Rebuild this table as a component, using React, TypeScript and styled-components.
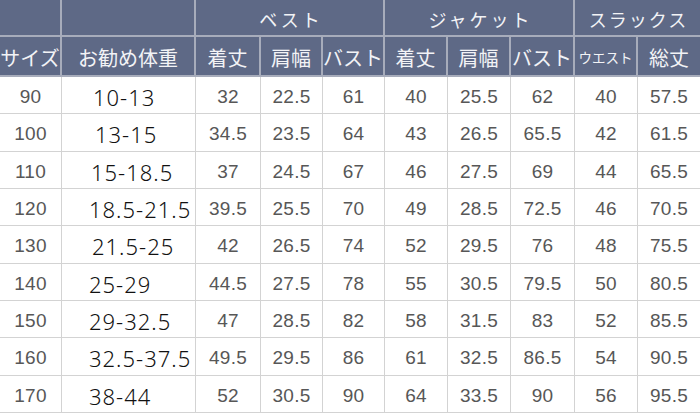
import React from "react";
import styled, { createGlobalStyle } from "styled-components";

const GlobalStyle = createGlobalStyle`
  html, body { margin: 0; padding: 0; background: #ffffff; }
  * { box-sizing: border-box; }
`;

const COLS = "62px 134px 65px 62px 62px 63px 63px 64px 63px 62px";

const Table = styled.div`
  display: grid;
  grid-template-columns: ${COLS};
  grid-template-rows: 37px 40px repeat(9, 1fr);
  width: 700px;
  height: 413px;
  overflow: hidden;
`;

const HeadCell = styled.div<{ $span?: number; $last?: boolean; $size?: number; $spacing?: number }>`
  grid-column: span ${(p) => p.$span ?? 1};
  background: #5e6986;
  color: #f2f3f6;
  font-family: "Noto Sans CJK JP", "Noto Sans", sans-serif;
  font-size: ${(p) => p.$size ?? 20}px;
  letter-spacing: ${(p) => p.$spacing ?? 0}px;
  padding-left: ${(p) => p.$spacing ?? 0}px;
  padding-top: 2px;
  display: flex;
  align-items: center;
  justify-content: center;
  white-space: nowrap;
  overflow: hidden;
  border-right: ${(p) => (p.$last ? "none" : "2px solid #a7acbb")};
  border-bottom: 2px solid #a7acbb;
`;

const Cell = styled.div<{ $last?: boolean }>`
  display: flex;
  align-items: center;
  justify-content: center;
  padding-top: 4px;
  color: #575757;
  font-family: "Liberation Sans", Arial, sans-serif;
  font-size: 19px;
  letter-spacing: 0.3px;
  white-space: nowrap;
  border-right: ${(p) => (p.$last ? "none" : "1px solid #d3d3d3")};
  border-bottom: 1px solid #d3d3d3;
`;

const WeightCell = styled(Cell)<{ $indent: number }>`
  justify-content: flex-start;
  padding-left: ${(p) => p.$indent}px;
  color: #111111;
  font-family: "Noto Sans", "Noto Sans CJK JP", sans-serif;
  font-weight: 300;
  font-size: 22px;
  letter-spacing: 1px;
`;

type Row = { size: string; weight: string; indent: number; vals: string[] };

const rows: Row[] = [
  { size: "90", weight: "10-13", indent: 31, vals: ["32", "22.5", "61", "40", "25.5", "62", "40", "57.5"] },
  { size: "100", weight: "13-15", indent: 33, vals: ["34.5", "23.5", "64", "43", "26.5", "65.5", "42", "61.5"] },
  { size: "110", weight: "15-18.5", indent: 29, vals: ["37", "24.5", "67", "46", "27.5", "69", "44", "65.5"] },
  { size: "120", weight: "18.5-21.5", indent: 27, vals: ["39.5", "25.5", "70", "49", "28.5", "72.5", "46", "70.5"] },
  { size: "130", weight: "21.5-25", indent: 30, vals: ["42", "26.5", "74", "52", "29.5", "76", "48", "75.5"] },
  { size: "140", weight: "25-29", indent: 27, vals: ["44.5", "27.5", "78", "55", "30.5", "79.5", "50", "80.5"] },
  { size: "150", weight: "29-32.5", indent: 27, vals: ["47", "28.5", "82", "58", "31.5", "83", "52", "85.5"] },
  { size: "160", weight: "32.5-37.5", indent: 27, vals: ["49.5", "29.5", "86", "61", "32.5", "86.5", "54", "90.5"] },
  { size: "170", weight: "38-44", indent: 27, vals: ["52", "30.5", "90", "64", "33.5", "90", "56", "95.5"] },
];

const subHeads: { label: string; size?: number }[] = [
  { label: "サイズ" },
  { label: "お勧め体重" },
  { label: "着丈" },
  { label: "肩幅" },
  { label: "バスト" },
  { label: "着丈" },
  { label: "肩幅" },
  { label: "バスト" },
  { label: "ウエスト", size: 13.5 },
  { label: "総丈" },
];

export default function App() {
  return (
    <>
      <GlobalStyle />
      <Table>
        <HeadCell />
        <HeadCell />
        <HeadCell $span={3} $size={18} $spacing={3}>ベスト</HeadCell>
        <HeadCell $span={3} $size={18} $spacing={3}>ジャケット</HeadCell>
        <HeadCell $span={2} $size={18} $spacing={2} $last>スラックス</HeadCell>
        {subHeads.map((h, i) => (
          <HeadCell key={i} $size={h.size} $last={i === subHeads.length - 1}>
            {h.label}
          </HeadCell>
        ))}
        {rows.map((r) => (
          <React.Fragment key={r.size}>
            <Cell>{r.size}</Cell>
            <WeightCell $indent={r.indent}>{r.weight}</WeightCell>
            {r.vals.map((v, i) => (
              <Cell key={i} $last={i === r.vals.length - 1}>
                {v}
              </Cell>
            ))}
          </React.Fragment>
        ))}
      </Table>
    </>
  );
}
